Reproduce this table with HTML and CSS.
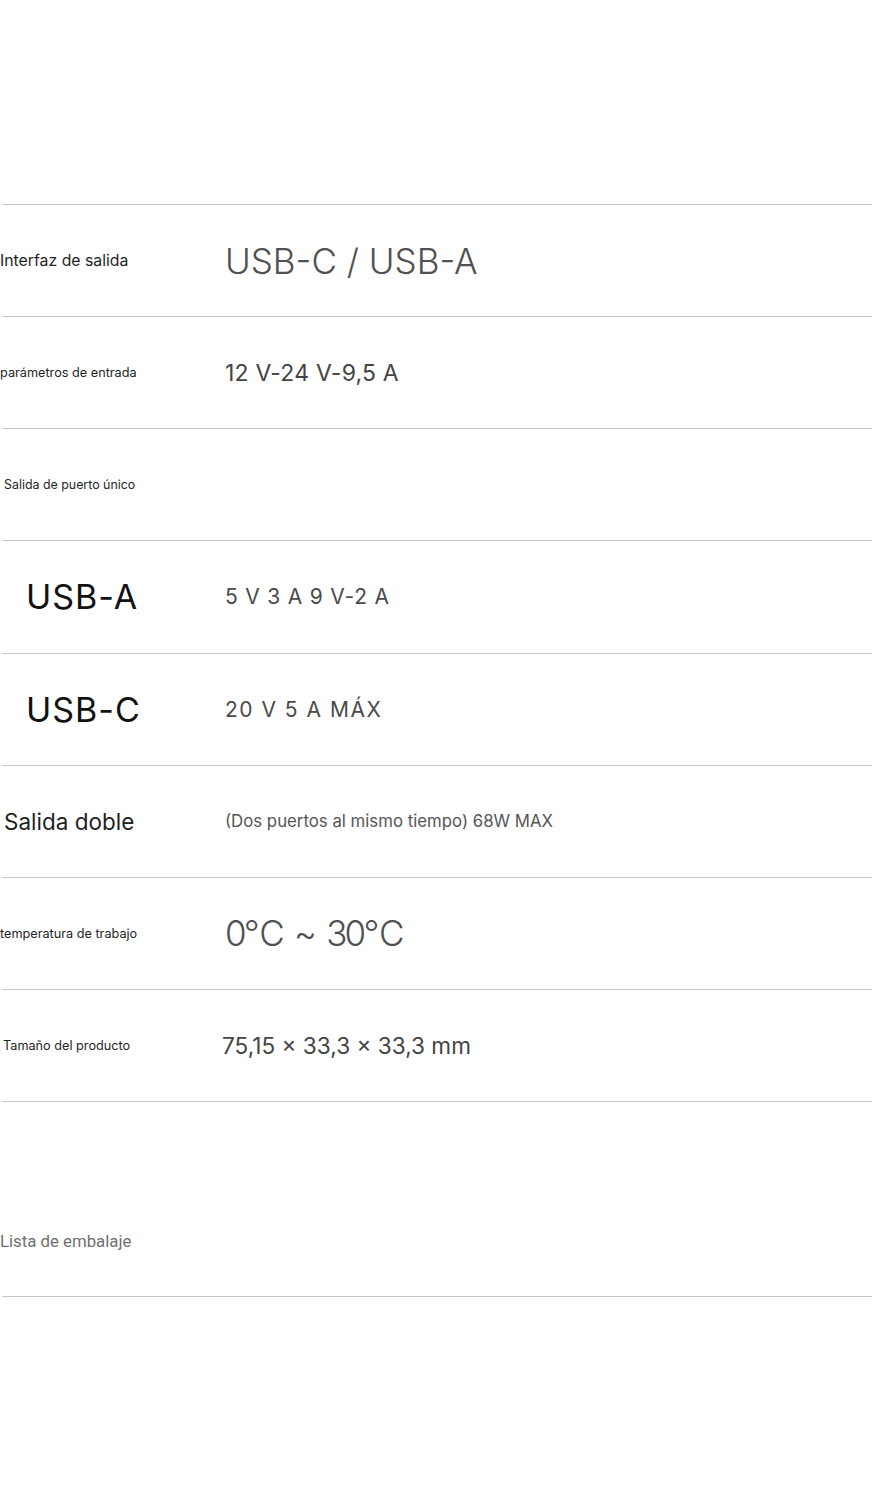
FILE: index.html
```html
<!DOCTYPE html>
<html lang="es">
<head>
<meta charset="utf-8">
<title>Especificaciones</title>
<link rel="stylesheet" href="styles.css">
</head>
<body>
<main class="page">
  <section class="specs">
    <div class="row">
      <div class="label l-15">Interfaz de salida</div>
      <div class="value v-big">USB-C / USB-A</div>
    </div>
    <div class="row">
      <div class="label l-13">parámetros de entrada</div>
      <div class="value v-mid">12 V-24 V-9,5 A</div>
    </div>
    <div class="row">
      <div class="label l-12 ind-4">Salida de puerto único</div>
      <div class="value"></div>
    </div>
    <div class="row">
      <div class="label l-port">USB-A</div>
      <div class="value v-spaced">5 V 3 A 9 V-2 A</div>
    </div>
    <div class="row">
      <div class="label l-port">USB-C</div>
      <div class="value v-spaced v-wide">20 V 5 A MÁX</div>
    </div>
    <div class="row">
      <div class="label l-22 ind-4">Salida doble</div>
      <div class="value v-small">(Dos puertos al mismo tiempo) 68W MAX</div>
    </div>
    <div class="row">
      <div class="label l-13">temperatura de trabajo</div>
      <div class="value v-big v-temp">0℃ ~ 30℃</div>
    </div>
    <div class="row row-last">
      <div class="label l-13 ind-3">Tamaño del producto</div>
      <div class="value v-size">75,15 × 33,3 × 33,3 mm</div>
    </div>
  </section>
  <section class="packing">
    <div class="row row-last">
      <div class="label l-list muted">Lista de embalaje</div>
    </div>
  </section>
</main>
</body>
</html>
```

FILE: styles.css
```css
* { box-sizing: border-box; }

html, body {
  margin: 0;
  padding: 0;
  background: #ffffff;
}

body {
  font-family: Inter, Roboto, "Liberation Sans", sans-serif;
  color: #1a1a1a;
}

.page {
  padding: 204px 3px 0 2px;
}

.row {
  display: grid;
  grid-template-columns: 225px 1fr;
  align-items: center;
  height: 112.125px;
  border-top: 1px solid #c6c6c6;
}

.row-last {
  border-bottom: 1px solid #c6c6c6;
  height: 113.125px;
}

.packing {
  margin-top: 83px;
}

.packing .row {
  border-top: none;
  height: 112px;
}

.label {
  white-space: nowrap;
  color: #1f1f1f;
  margin-left: -2px;
}

.l-15 { font-size: 15.8px; }
.l-13 { font-size: 12.7px; }
.l-12 { font-size: 12.4px; }
.l-22 { font-size: 22.5px; }
.l-list {
  font-family: Roboto, "Liberation Sans", sans-serif;
  font-size: 16.8px;
}
.l-port {
  font-size: 34px;
  color: #111;
  padding-left: 26px;
  letter-spacing: 1px;
}

.ind-4 { padding-left: 4px; }
.ind-3 { padding-left: 3px; }

.muted { color: #6f6f6f; }

.value {
  white-space: nowrap;
  color: #4a4a4a;
  margin-left: -2px;
}

.v-big {
  font-size: 35px;
  font-weight: 300;
  color: #505050;
}

.v-temp {
  letter-spacing: -2.8px;
  word-spacing: 5px;
}

.v-mid {
  font-size: 23px;
  color: #444;
  letter-spacing: 0.2px;
}

.v-size {
  font-size: 22.6px;
  color: #444;
  margin-left: -5px;
}

.v-spaced {
  font-size: 21px;
  color: #4a4a4a;
  letter-spacing: 0.8px;
}

.v-wide { letter-spacing: 1.5px; }

.v-small {
  font-size: 16.8px;
  color: #555;
}
```
